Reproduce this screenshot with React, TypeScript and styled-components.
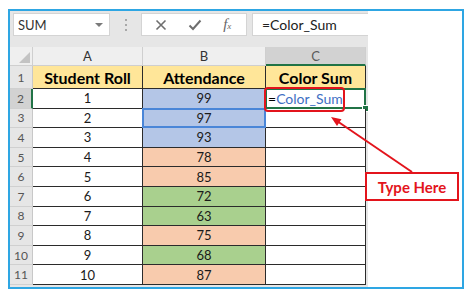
import React from "react";
import styled, { createGlobalStyle } from "styled-components";

const GlobalStyle = createGlobalStyle`
  html, body { margin: 0; padding: 0; background: #fff; }
  body { font-family: Lato, "Liberation Sans", sans-serif; }
`;

const Frame = styled.div`
  position: relative;
  margin: 9px 0 0 8px;
  width: 452px;
  height: 276px;
  border: 2px solid #2ea6e3;
  background: #fff;
  display: flex;
`;

const Excel = styled.div`
  width: 358px;
  background: #e6e6e6;
  display: flex;
  flex-direction: column;
`;

const Toolbar = styled.div`
  height: 36px;
  box-sizing: border-box;
  padding: 2px 0 11px 3px;
  display: flex;
`;

const NameBox = styled.div`
  width: 97px;
  box-sizing: border-box;
  background: #fff;
  border: 1px solid #d4d4d4;
  display: flex;
  align-items: center;
  justify-content: space-between;
  padding: 0 6px 0 4px;
  font-size: 13px;
  color: #333;
`;

const Caret = styled.span`
  width: 0;
  height: 0;
  border-left: 4px solid transparent;
  border-right: 4px solid transparent;
  border-top: 4px solid #7a7a7a;
`;

const Dots = styled.div`
  width: 31px;
  display: flex;
  flex-direction: column;
  align-items: center;
  justify-content: center;
  gap: 3px;
  span {
    width: 2px;
    height: 2px;
    background: #a8a8a8;
  }
`;

const IconBox = styled.div`
  width: 106px;
  box-sizing: border-box;
  background: #fff;
  border: 1px solid #d4d4d4;
  display: flex;
  align-items: center;
  justify-content: space-around;
  padding: 0 4px 0 2px;
  color: #6e6e6e;
`;

const Fx = styled.span`
  font-family: "Liberation Serif", serif;
  font-style: italic;
  font-size: 15px;
  color: #666;
  sub {
    font-size: 9px;
    vertical-align: baseline;
  }
`;

const FormulaBox = styled.div`
  flex: 1;
  margin-left: 5px;
  background: #fff;
  border: 1px solid #d4d4d4;
  border-right: none;
  display: flex;
  align-items: center;
  padding-left: 9px;
  font-size: 14px;
  color: #222;
`;

const Grid = styled.div`
  display: grid;
  grid-template-columns: 23px 110px 123px 100px;
  grid-template-rows: 19px 23px repeat(10, 19.6px);
  font-size: 13px;
  color: #1a1a1a;
`;

const Corner = styled.div`
  background: #efefef;
  border-right: 1px solid #cfcfcf;
  border-bottom: 1px solid #cfcfcf;
  display: flex;
  align-items: flex-end;
  justify-content: flex-end;
  padding: 0 2px 2px 0;
  span {
    width: 0;
    height: 0;
    border-left: 11px solid transparent;
    border-bottom: 11px solid #c3c3c3;
  }
`;

const ColHead = styled.div<{ $active?: boolean }>`
  background: ${(p) => (p.$active ? "#d2d2d2" : "#efefef")};
  border-right: 1px solid #cfcfcf;
  border-bottom: ${(p) => (p.$active ? "2px solid #217346" : "1px solid #cfcfcf")};
  display: flex;
  align-items: center;
  justify-content: center;
  color: ${(p) => (p.$active ? "#5a5a5a" : "#333")};
  font-size: 13px;
`;

const RowHead = styled.div<{ $active?: boolean }>`
  background: ${(p) => (p.$active ? "#d2d2d2" : "#e6e6e6")};
  border-right: ${(p) => (p.$active ? "2px solid #217346" : "1px solid #c8c8c8")};
  border-bottom: 1px solid #d0d0d0;
  display: flex;
  align-items: center;
  justify-content: center;
  color: #555;
  font-size: 12px;
`;

const Cell = styled.div<{ $bg?: string; $head?: boolean; $line?: string }>`
  position: relative;
  background: ${(p) => p.$bg || "#fff"};
  border-right: 1px solid #2b2b2b;
  border-bottom: 1px solid ${(p) => p.$line || "#2b2b2b"};
  display: flex;
  align-items: center;
  justify-content: center;
  font-weight: ${(p) => (p.$head ? 700 : 400)};
  font-size: ${(p) => (p.$head ? "16px" : "13px")};
  color: ${(p) => (p.$head ? "#000" : "#1a1a1a")};
`;

const Selected = styled.div<{ $color: string }>`
  position: absolute;
  inset: -1px -1px -1px -1px;
  border: 2px solid ${(p) => p.$color};
  pointer-events: none;
`;

const Handle = styled.span`
  position: absolute;
  right: -4px;
  bottom: -4px;
  width: 5px;
  height: 5px;
  background: #217346;
  border: 1px solid #fff;
`;

const FormulaText = styled.span`
  position: absolute;
  left: 2px;
  top: 1px;
  font-size: 14px;
  color: #000;
  b {
    font-weight: 400;
    color: #3e6fc4;
  }
`;

const RedRing = styled.div`
  position: absolute;
  left: -2px;
  top: -2px;
  width: 81px;
  height: 25px;
  box-sizing: border-box;
  border: 2px solid #e3141c;
  border-radius: 4px;
  z-index: 2;
`;

const Bottom = styled.div`
  flex: 1;
`;

const Callout = styled.div`
  position: absolute;
  left: 355px;
  top: 161px;
  width: 94px;
  height: 29px;
  box-sizing: border-box;
  border: 2px solid #e3141c;
  background: #fff;
  display: flex;
  align-items: center;
  justify-content: center;
  color: #e3141c;
  font-weight: 700;
  font-size: 15px;
  z-index: 3;
`;

const Arrow = styled.svg`
  position: absolute;
  left: 0;
  top: 0;
  z-index: 3;
  pointer-events: none;
`;

const BLUE = "#b4c6e7";
const ORANGE = "#f8cbad";
const GREEN = "#a9d08e";

const rows: [number, number, string][] = [
  [1, 99, BLUE],
  [2, 97, BLUE],
  [3, 93, BLUE],
  [4, 78, ORANGE],
  [5, 85, ORANGE],
  [6, 72, GREEN],
  [7, 63, GREEN],
  [8, 75, ORANGE],
  [9, 68, GREEN],
  [10, 87, ORANGE],
];

const App: React.FC = () => {
  return (
    <>
      <GlobalStyle />
      <Frame>
        <Excel>
          <Toolbar>
            <NameBox>
              SUM
              <Caret />
            </NameBox>
            <Dots>
              <span />
              <span />
              <span />
            </Dots>
            <IconBox>
              <svg width="12" height="12" viewBox="0 0 12 12">
                <path d="M1.5 1.5 L10.5 10.5 M10.5 1.5 L1.5 10.5" stroke="#6e6e6e" strokeWidth="1.6" fill="none" />
              </svg>
              <svg width="14" height="12" viewBox="0 0 14 12">
                <path d="M1.5 6.5 L5 10 L12.5 1.5" stroke="#6e6e6e" strokeWidth="2" fill="none" />
              </svg>
              <Fx>
                f<sub>x</sub>
              </Fx>
            </IconBox>
            <FormulaBox>=Color_Sum</FormulaBox>
          </Toolbar>
          <Grid>
            <Corner>
              <span />
            </Corner>
            <ColHead>A</ColHead>
            <ColHead>B</ColHead>
            <ColHead $active>C</ColHead>

            <RowHead>1</RowHead>
            <Cell $bg="#ffe699" $head>Student Roll</Cell>
            <Cell $bg="#ffe699" $head>Attendance</Cell>
            <Cell $bg="#ffe699" $head>Color Sum</Cell>

            {rows.map(([roll, att, color], i) => (
              <React.Fragment key={roll}>
                <RowHead $active={i === 0}>{i + 2}</RowHead>
                <Cell>{roll}</Cell>
                <Cell $bg={color} $line={color === BLUE && i < 2 ? "#8ea9db" : undefined}>
                  {att}
                  {i === 1 && <Selected $color="#4a86d8" />}
                </Cell>
                <Cell>
                  {i === 0 && (
                    <>
                      <FormulaText>
                        =<b>Color_Sum</b>
                      </FormulaText>
                      <RedRing />
                      <Selected $color="#217346" />
                      <Handle />
                    </>
                  )}
                </Cell>
              </React.Fragment>
            ))}
          </Grid>
          <Bottom />
        </Excel>
        <Arrow width="452" height="276">
          <line x1="402" y1="161" x2="327" y2="110" stroke="#e3141c" strokeWidth="2" />
          <polygon points="321,106 331.5,108.3 327,114.9" fill="#e3141c" />
        </Arrow>
        <Callout>Type Here</Callout>
      </Frame>
    </>
  );
};

export default App;
